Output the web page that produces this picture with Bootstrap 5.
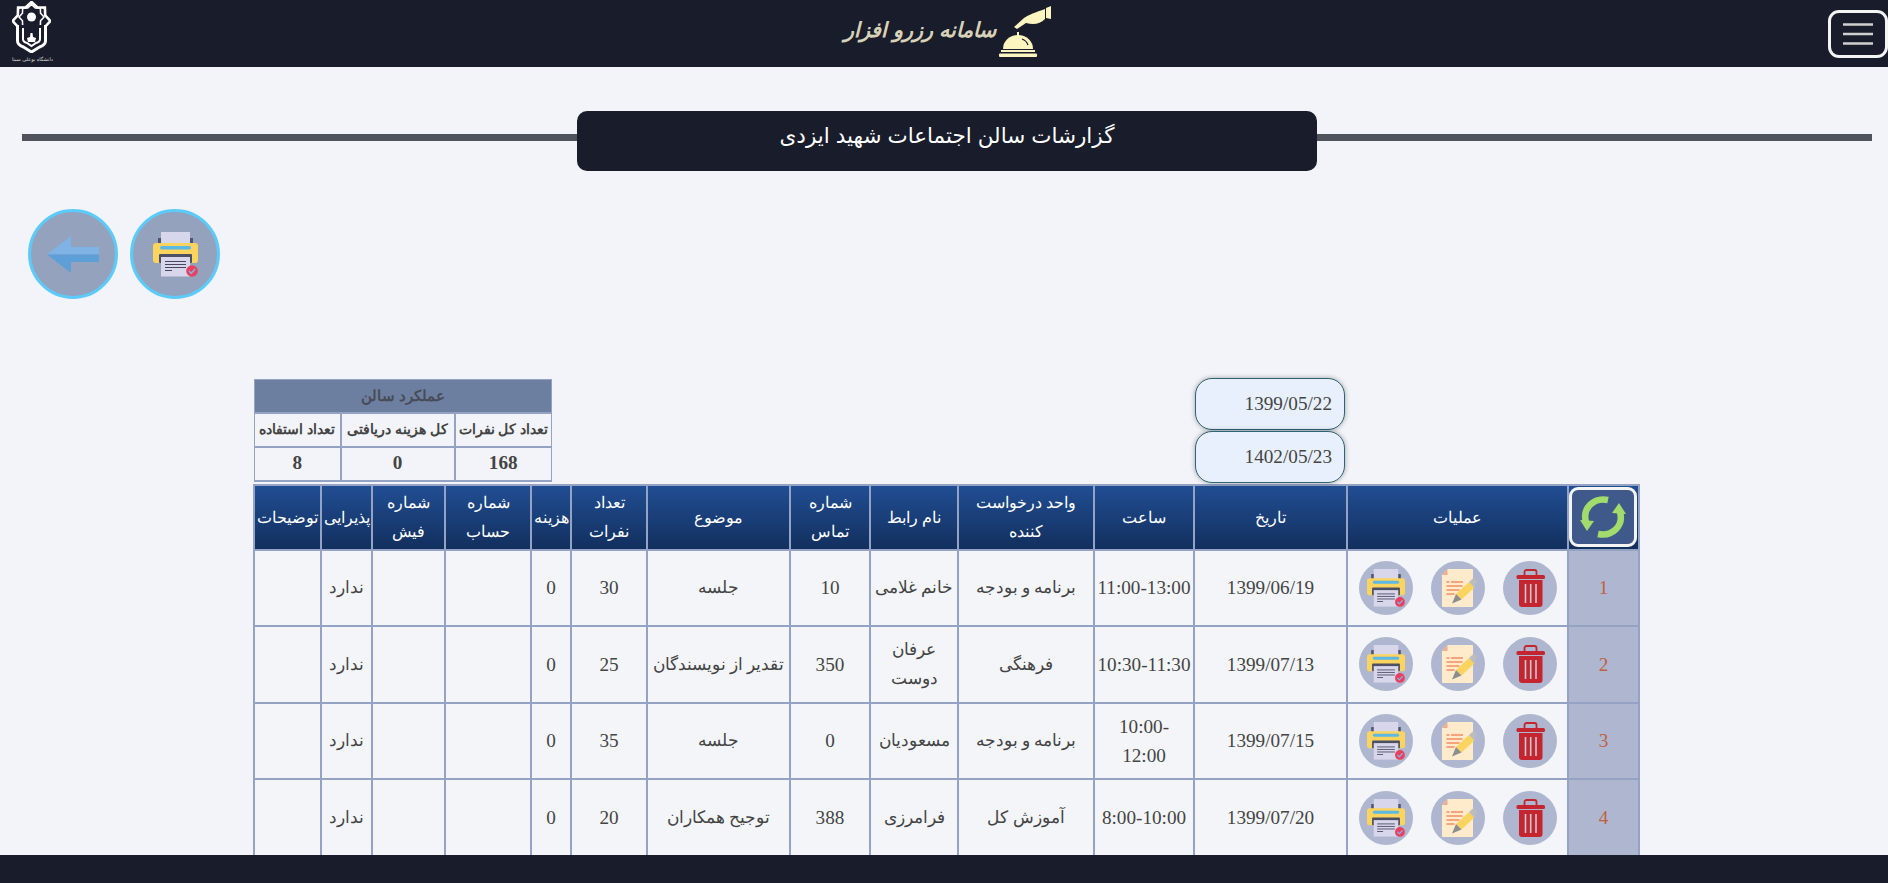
<!DOCTYPE html>
<html lang="fa">
<head>
<meta charset="utf-8">
<title>گزارشات سالن</title>
<link href="https://cdn.jsdelivr.net/npm/bootstrap@5.3.0/dist/css/bootstrap.min.css" rel="stylesheet">
<style>
html,body{height:100%;overflow:hidden}
body{background:#f2f4f9;font-family:"Liberation Serif","DejaVu Serif",serif;font-size:19.2px;color:#444;}
.topbar{background:#181c2b;height:67px;padding:0}
.side{flex:1 1 0}
.uni{width:50px;height:66px;margin-left:12px;color:#fff}
.uni-name{font:5px "DejaVu Sans",sans-serif;line-height:9px;color:#ddd;text-align:left;white-space:nowrap;margin-top:2px}
.brandgroup{padding-left:7px}
.brandname{font-family:"Liberation Sans","DejaVu Sans",sans-serif;font-size:20.7px;font-weight:700;font-style:italic;color:#d8d2b8;margin-top:-8px;margin-right:2px}
.menu-btn{width:60px;height:48px;padding:0;border:3px solid #f4f4f4;border-radius:11px}
.titlerow{margin:44px 16px 0 22px}
.rule{height:7px;background:#4f545c;margin-top:23px;flex:1 1 0}
.titlebox{width:740px;height:60px;background:#181c2b;color:#fff;border-radius:10px;font-family:"Liberation Sans","DejaVu Sans",sans-serif;font-size:21.5px;line-height:50px}
.actionsrow{margin:38px 0 0 28px;gap:12px}
.bigbtn{width:90px;height:90px;padding:0;border:3px solid #5ccbf9;border-radius:50%;background:#94a2bd}
.report{width:1387px;margin:80px 0 0 253px}
.summary{width:297px;margin:0 0 2px 1px;table-layout:fixed;--bs-table-bg:#f2f4f9;border-color:#94a3c4;font-weight:700;color:#444}
.summary>*>tr>*{border:2px solid #94a3c4;padding:0;text-align:center;vertical-align:middle;color:#444}
.summary tr:first-child>*{border-top-width:1px}
.summary tr>*:first-child{border-right-width:1px}
.summary tr>*:last-child{border-left-width:1px}
.summary .sumhead{background:#6d7fa0;font-size:15px;height:33px;color:#474c58}
.summary .sumlabels{font-size:14.2px;height:34px;white-space:nowrap}
.summary .sumlabels>*{height:34px}
.summary .sumvals>*{height:34px}
.cs1{width:86px}.cs2{width:114px}.cs3{width:97px}
.dates{width:150px;margin:-1px 295px 0 auto;gap:1px}
.datebox{height:52px;width:150px;background:#e8f0fe;border:1px solid #2f6476;border-radius:17px;box-shadow:0 0 5px rgba(0,0,0,.35);padding:0 12px;text-align:right;font-size:19.2px;color:#444}
.main{width:1387px;table-layout:fixed;margin:0;--bs-table-bg:#f3f5f9;color:#444;border-color:#94a3c4}
.main>*>tr>*{border:2px solid #94a3c4;padding:0 1px;text-align:center;vertical-align:middle;color:#444;line-height:29px}
.main thead th{height:65px;font-weight:400;color:#fff;font-size:15.5px;background:linear-gradient(#214e93,#122f5e)}
.main tbody tr{height:76.6px}
.main tbody td.idx{background:#aeb7cf;color:#c0603f}
.main td.fa{font-size:16.5px}
.narrow{display:inline-block;width:76px}
.main th .narrow{width:56px}
.c1{width:71px}.c2{width:221px}.c3{width:153px}.c4{width:100px}.c5{width:136px}.c6{width:88px}.c7{width:80px}.c8{width:143px}.c9{width:76px}.c10{width:40px}.c11{width:86px}.c12{width:73px}.c13{width:51px}.c14{width:67px}
.refresh{width:68px;height:60px;padding:0;background:#3f5a8a;border:3px solid #f4f4f4;border-radius:9px;display:flex;align-items:center;justify-content:center;margin:0 auto}
.roundbtn{width:54px;height:54px;padding:0;border:0;border-radius:50%;background:#aeb7cf;display:flex;align-items:center;justify-content:center}
.opsgap{gap:18px}
.bottombar{height:28px;background:#181c2b}
</style>
</head>
<body>
<svg width="0" height="0" class="d-none">
<symbol id="i-print" viewBox="0 0 45 45">
<rect x="5" y="6" width="35" height="7" fill="#51536a"/>
<rect x="8" y="0" width="29" height="12" fill="#d8d6ea"/>
<rect x="0" y="11" width="45" height="20" rx="3" fill="#fbd35f"/>
<rect x="7" y="14" width="31" height="3.5" rx="1.7" fill="#5cb8e4"/>
<rect x="6" y="22" width="33" height="9" rx="1" fill="#4d5064"/>
<rect x="8" y="25" width="29" height="19.5" fill="#d8d6ea"/>
<path d="M12 29.5h21M12 32.5h21M12 35.5h21M12 38.5h7" stroke="#45475c" stroke-width="1"/>
<circle cx="39" cy="39" r="5.8" fill="#ea3f5f"/>
<path d="M36 39l2.2 2.3 4-4.3" fill="none" stroke="#7fb6e6" stroke-width="1.5"/>
</symbol>
<symbol id="i-doc" viewBox="0 0 38 38">
<path d="M8.500 0H33a1 1 0 0 1 1 1v36a1 1 0 0 1-1 1H4a1 1 0 0 1-1-1V6z" fill="#fdebcc"/>
<path d="M3 6l5.500-6V6z" fill="#f0ab90"/>
<path d="M7.500 13h3M12 13h12M7.500 17h16M7.500 21h13M7.500 25h8" stroke="#f58d62" stroke-width="1.500"/>
<path d="M17 25L30 13l5.500 5.500-13 12z" fill="#fbd35f"/>
<path d="M17 25l5.500 5.500-9.500 4z" fill="#8d8d8d"/>
<path d="M30 13l3-2.800a2.500 2.500 0 0 1 4 .5c1 1.500.5 3-.5 4l-1 4.300z" fill="#bdbdbd"/>
</symbol>
<symbol id="i-trash" viewBox="0 0 38 38">
<path d="M13.500 6V3a2 2 0 0 1 2-2h8a2 2 0 0 1 2 2v3" fill="none" stroke="#c4252e" stroke-width="1.800"/>
<rect x="5.500" y="6" width="28.500" height="4" rx="1.500" fill="#c4252e"/>
<path d="M8 11h23.500v24a3 3 0 0 1-3 3H11a3 3 0 0 1-3-3z" fill="#c4252e"/>
<path d="M14.500 15v19M19.700 15v19M25 15v19" stroke="#c6c9d6" stroke-width="1.600"/>
</symbol>
</svg>

<nav class="navbar navbar-dark topbar">
  <div class="d-flex align-items-center w-100">
    <div class="side d-flex">
      <div class="uni">
        <svg width="39" height="52" viewBox="0 0 39 52" fill="none" stroke="#fff" class="d-block">
          <g transform="translate(19.500 20)">
            <polygon points="0,-19 5.700,-13.700 13.400,-13.400 13.700,-5.700 19,0 13.700,5.700 13.400,13.400 5.700,13.700 0,19 -5.700,13.700 -13.400,13.400 -13.700,5.700 -19,0 -13.700,-5.700 -13.400,-13.400 -5.700,-13.700" stroke-width="2.600"/>
            <polygon transform="scale(.66) translate(0 -6)" points="0,-19 5.700,-13.700 13.400,-13.400 13.700,-5.700 19,0 13.700,5.700 13.400,13.400 5.700,13.700 0,19 -5.700,13.700 -13.400,13.400 -13.700,5.700 -19,0 -13.700,-5.700 -13.400,-13.400 -5.700,-13.700" stroke-width="2.400"/>
          </g>
          <circle cx="19.500" cy="16" r="4.500" fill="#fff" stroke="none"/>
          <path d="M5.500 24V40q0 4 6 6L19.500 51 27.500 46q6-2 6-6V24" fill="#181c2b" stroke-width="3"/>
          <path d="M11 27V38q0 3 4 4L19.500 45 24 42q4-1 4-4V27" stroke-width="2"/>
          <path d="M18.500 32h2l.5 4 3 1-1 4h-7l-1-4 3-1z" fill="#fff" stroke="none"/>
        </svg>
        <div class="uni-name">دانشگاه بوعلی سینا</div>
      </div>
    </div>
    <div class="brandgroup d-flex align-items-center">
      <span class="brandname">سامانه رزرو افزار</span>
      <svg width="53" height="52" viewBox="0 0 53 52" class="mb-1">
        <path d="M47 3C38 6 30 9 26 12L16 21l3 2 9-6c8 2 14 1 19-4z" fill="#fdf5c0"/>
        <path d="M48 2l5-2v13l-5-1z" fill="#fdf5c0"/>
        <rect x="19" y="26" width="2" height="4" fill="#fdf5c0"/>
        <path d="M5 43A15 14 0 0 1 35 43z" fill="#fdf5c0"/>
        <path d="M24 33c3 1 5 3 6 6" fill="none" stroke="#181c2b" stroke-width="1.200"/>
        <rect x="3" y="44" width="34" height="2" fill="#fdf5c0"/>
        <rect x="1" y="47.500" width="38" height="3.500" rx="1" fill="#fdf5c0"/>
      </svg>
    </div>
    <div class="side d-flex justify-content-end">
      <button class="navbar-toggler menu-btn d-flex align-items-center justify-content-center" type="button" aria-label="منو">
        <svg width="30" height="24" viewBox="0 0 30 24"><path d="M0 2.500h30M0 12h30M0 21.500h30" stroke="#cfcfcf" stroke-width="2.400"/></svg>
      </button>
    </div>
  </div>
</nav>

<div class="titlerow d-flex align-items-start">
  <div class="rule"></div>
  <div class="titlebox text-center">گزارشات سالن اجتماعات شهید ایزدی</div>
  <div class="rule"></div>
</div>

<div class="actionsrow d-flex">
  <button class="bigbtn d-flex align-items-center justify-content-center" type="button" aria-label="بازگشت">
    <svg width="52" height="37" viewBox="0 0 52 37">
      <path d="M0 18.500L24 0v11h28v7.500z" fill="#7fb2e5"/>
      <path d="M0 18.500L24 37V26h28v-7.500z" fill="#5e9fd8"/>
    </svg>
  </button>
  <button class="bigbtn d-flex align-items-center justify-content-center" type="button" aria-label="چاپ">
    <svg width="45" height="45"><use href="#i-print"/></svg>
  </button>
</div>

<div class="report">
  <div class="d-flex align-items-start">
    <table class="table summary" dir="rtl">
      <colgroup><col class="cs3"><col class="cs2"><col class="cs1"></colgroup>
      <tbody>
        <tr><td class="sumhead" colspan="3">عملکرد سالن</td></tr>
        <tr class="sumlabels"><td>تعداد کل نفرات</td><td>کل هزینه دریافتی</td><td>تعداد استفاده</td></tr>
        <tr class="sumvals"><td>168</td><td>0</td><td>8</td></tr>
      </tbody>
    </table>
    <div class="dates d-flex flex-column">
      <input class="datebox" dir="rtl" type="text" value="1399/05/22" aria-label="از تاریخ">
      <input class="datebox" dir="rtl" type="text" value="1402/05/23" aria-label="تا تاریخ">
    </div>
  </div>
  <table class="table main" dir="rtl">
    <colgroup><col class="c1"><col class="c2"><col class="c3"><col class="c4"><col class="c5"><col class="c6"><col class="c7"><col class="c8"><col class="c9"><col class="c10"><col class="c11"><col class="c12"><col class="c13"><col class="c14"></colgroup>
    <thead>
      <tr>
        <th><button class="refresh" type="button" aria-label="بازخوانی">
          <svg width="46" height="46" viewBox="0 0 46 46" fill="none">
            <path d="M6 28C2 14 14 3 28 6" stroke="#a2dc6c" stroke-width="6.500"/>
            <path d="M40 18c4 14-8 25-22 22" stroke="#a2dc6c" stroke-width="6.500"/>
            <path d="M0 26l7 11 7-10z" fill="#a2dc6c"/>
            <path d="M46 20l-7-11-7 10z" fill="#a2dc6c"/>
          </svg>
        </button></th>
        <th>عملیات</th><th>تاریخ</th><th>ساعت</th><th>واحد درخواست کننده</th><th>نام رابط</th><th>شماره تماس</th><th>موضوع</th><th><span class="narrow">تعداد نفرات</span></th><th>هزینه</th><th>شماره حساب</th><th><span class="narrow">شماره فیش</span></th><th>پذیرایی</th><th>توضیحات</th>
      </tr>
    </thead>
    <tbody>
      <tr>
        <td class="idx">1</td>
        <td><div class="d-flex justify-content-center opsgap"><button class="roundbtn" type="button" aria-label="حذف"><svg width="38" height="38"><use href="#i-trash"/></svg></button><button class="roundbtn" type="button" aria-label="ویرایش"><svg width="38" height="38"><use href="#i-doc"/></svg></button><button class="roundbtn" type="button" aria-label="چاپ"><svg width="38" height="38"><use href="#i-print"/></svg></button></div></td>
        <td>1399/06/19</td><td>11:00-13:00</td><td class="fa">برنامه و بودجه</td><td class="fa">خانم غلامی</td><td>10</td><td class="fa">جلسه</td><td>30</td><td>0</td><td></td><td></td><td class="fa">ندارد</td><td></td>
      </tr>
      <tr>
        <td class="idx">2</td>
        <td><div class="d-flex justify-content-center opsgap"><button class="roundbtn" type="button" aria-label="حذف"><svg width="38" height="38"><use href="#i-trash"/></svg></button><button class="roundbtn" type="button" aria-label="ویرایش"><svg width="38" height="38"><use href="#i-doc"/></svg></button><button class="roundbtn" type="button" aria-label="چاپ"><svg width="38" height="38"><use href="#i-print"/></svg></button></div></td>
        <td>1399/07/13</td><td>10:30-11:30</td><td class="fa">فرهنگی</td><td class="fa"><span class="narrow">عرفان دوست</span></td><td>350</td><td class="fa">تقدیر از نویسندگان</td><td>25</td><td>0</td><td></td><td></td><td class="fa">ندارد</td><td></td>
      </tr>
      <tr>
        <td class="idx">3</td>
        <td><div class="d-flex justify-content-center opsgap"><button class="roundbtn" type="button" aria-label="حذف"><svg width="38" height="38"><use href="#i-trash"/></svg></button><button class="roundbtn" type="button" aria-label="ویرایش"><svg width="38" height="38"><use href="#i-doc"/></svg></button><button class="roundbtn" type="button" aria-label="چاپ"><svg width="38" height="38"><use href="#i-print"/></svg></button></div></td>
        <td>1399/07/15</td><td><span class="narrow">10:00-12:00</span></td><td class="fa">برنامه و بودجه</td><td class="fa">مسعودیان</td><td>0</td><td class="fa">جلسه</td><td>35</td><td>0</td><td></td><td></td><td class="fa">ندارد</td><td></td>
      </tr>
      <tr>
        <td class="idx">4</td>
        <td><div class="d-flex justify-content-center opsgap"><button class="roundbtn" type="button" aria-label="حذف"><svg width="38" height="38"><use href="#i-trash"/></svg></button><button class="roundbtn" type="button" aria-label="ویرایش"><svg width="38" height="38"><use href="#i-doc"/></svg></button><button class="roundbtn" type="button" aria-label="چاپ"><svg width="38" height="38"><use href="#i-print"/></svg></button></div></td>
        <td>1399/07/20</td><td>8:00-10:00</td><td class="fa">آموزش کل</td><td class="fa">فرامرزی</td><td>388</td><td class="fa">توجیح همکاران</td><td>20</td><td>0</td><td></td><td></td><td class="fa">ندارد</td><td></td>
      </tr>
    </tbody>
  </table>
</div>

<div class="fixed-bottom bottombar"></div>
<script src="https://cdn.jsdelivr.net/npm/bootstrap@5.3.0/dist/js/bootstrap.bundle.min.js"></script>
</body>
</html>
